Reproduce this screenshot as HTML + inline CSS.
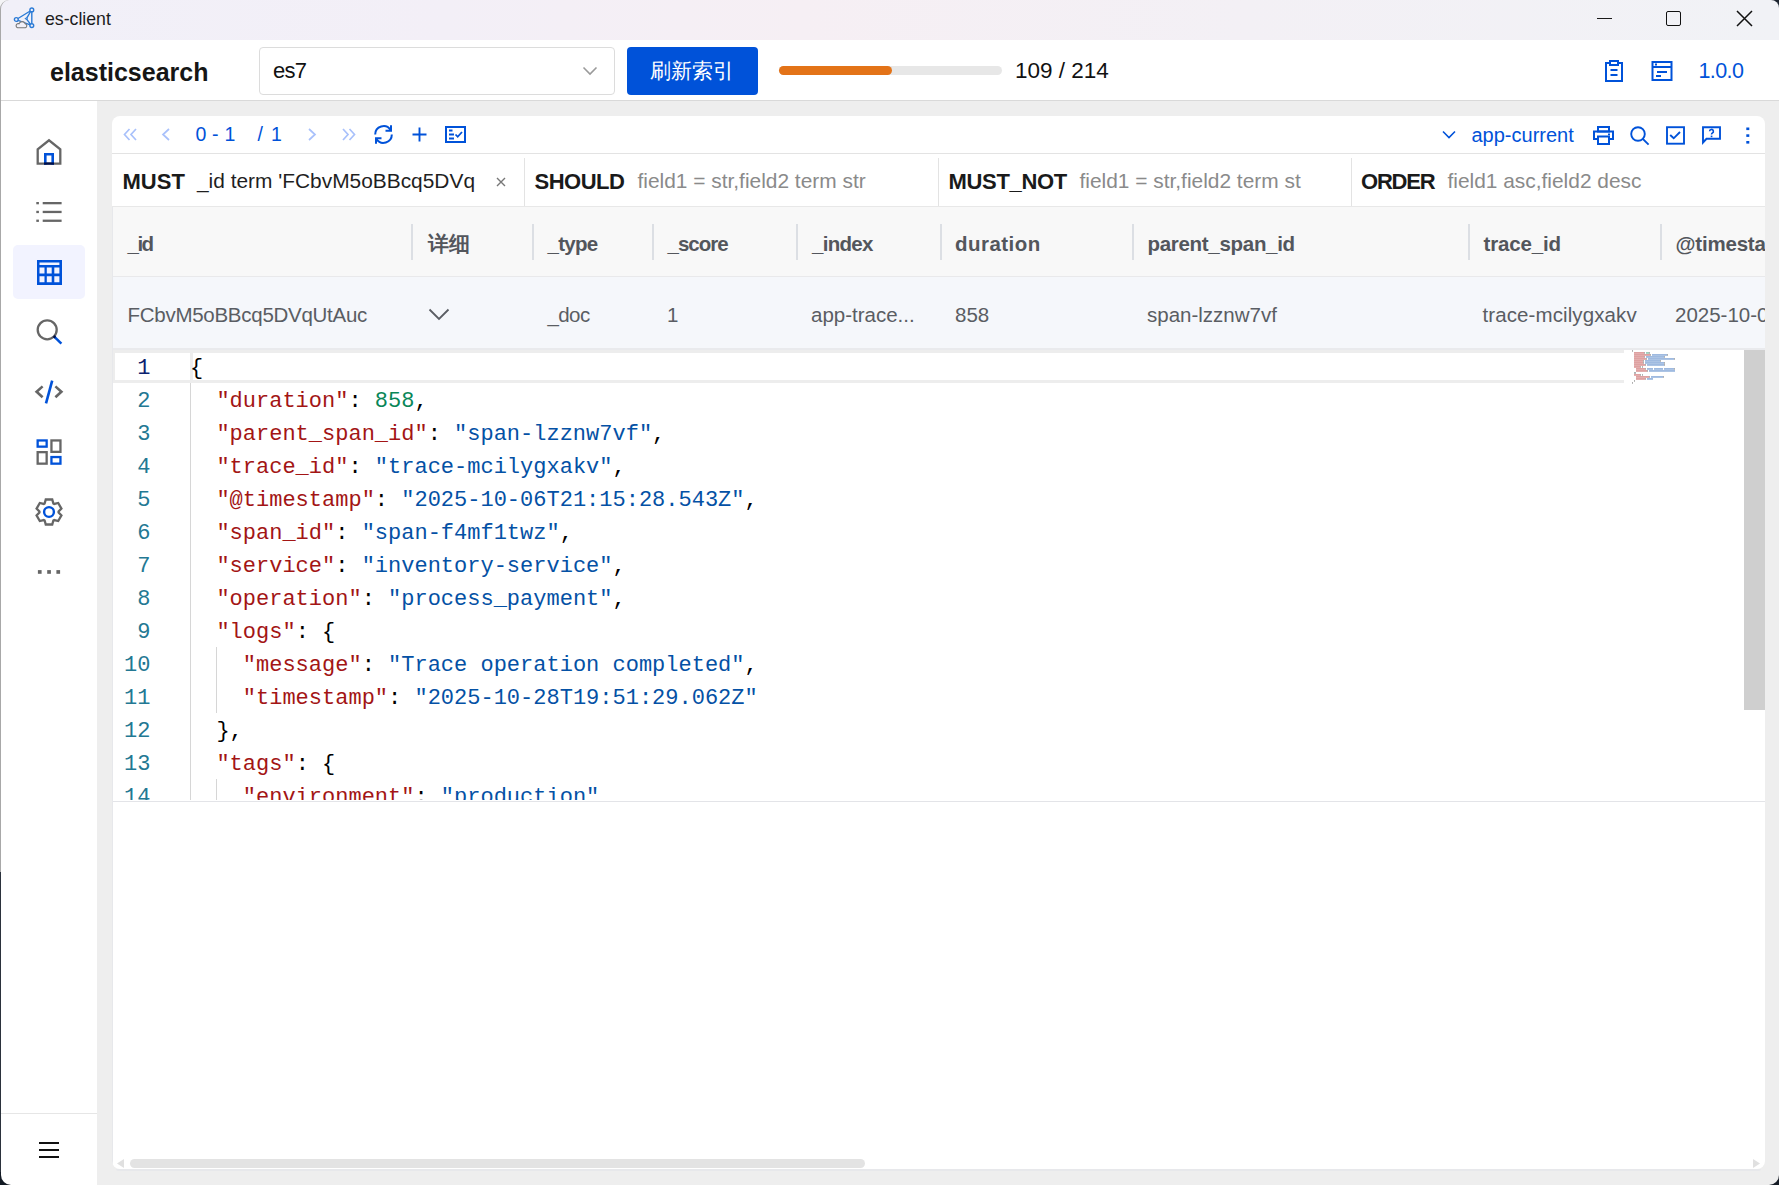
<!DOCTYPE html>
<html><head><meta charset="utf-8">
<style>
*{box-sizing:border-box;margin:0;padding:0}
html,body{width:1779px;height:1185px;overflow:hidden;background:#eeeeee;font-family:"Liberation Sans",sans-serif;position:relative}
.abs{position:absolute}
.t{position:absolute;line-height:1;white-space:nowrap}
.mono{font-family:"Liberation Mono",monospace}
</style></head><body>
<div class="abs" style="left:0;top:0;width:1779px;height:40px;background:linear-gradient(90deg,#f1f0f8 0%,#f3eff7 25%,#f6eff4 45%,#f3f0f5 70%,#f1f2f6 100%)"></div>
<svg class="abs" style="left:13px;top:6px" width="23" height="24" viewBox="0 0 23 24">
<g fill="none" stroke="#2b7bd6" stroke-width="1.4">
<circle cx="18.8" cy="3.9" r="1.9"/><circle cx="3.3" cy="13.5" r="1.9"/><circle cx="18.8" cy="19.6" r="1.9"/>
<path d="M12.3 12.6 L14.2 11.3 L14.2 13.9 Z" stroke-width="1.1"/>
<path d="M5 12.5 L17.2 5 M18.8 5.8 V17.7 M5.1 14.3 L17.2 18.9 M14.2 11.3 L17.6 5.5 M14.2 13.9 L17.4 18.2"/>
</g>
<path d="M4.6 21.8 H12.4 A2.2 2.2 0 0 0 12.1 17.6 A3.3 3.3 0 0 0 6 17.7 A2 2 0 0 0 4.6 21.8 Z" fill="#f2f0f8" stroke="#777" stroke-width="1.1"/>
</svg>
<div class="t" id="t_title" style="left:45px;top:11.22px;font-size:17.7px;color:#1c1c1c;font-family:'Liberation Sans',sans-serif;">es-client</div>
<div class="abs" style="left:1771px;top:0;width:8px;height:8px;background:#1d2530"></div>
<div class="abs" style="left:1759px;top:0;width:20px;height:20px;background:#f1f2f6;border-top-right-radius:8px"></div>
<div class="abs" style="left:1597px;top:18px;width:15px;height:1px;background:#1a1a1a"></div>
<div class="abs" style="left:1666px;top:11px;width:15px;height:15px;border:1.4px solid #111;border-radius:2px"></div>
<svg class="abs" style="left:1736px;top:10px" width="17" height="17" viewBox="0 0 17 17"><path d="M1 1 L16 16 M16 1 L1 16" stroke="#111" stroke-width="1.5"/></svg>
<div class="abs" style="left:0;top:40px;width:1779px;height:60px;background:#fff"></div>
<div class="abs" style="left:0;top:100px;width:1779px;height:1px;background:#d9d9d9"></div>
<div class="t" id="t_es" style="left:50px;top:60.04px;font-size:25px;color:#161616;font-family:'Liberation Sans',sans-serif;font-weight:bold;">elasticsearch</div>
<div class="abs" style="left:259px;top:47px;width:356px;height:48px;border:1px solid #dcdcdc;border-radius:4px;background:#fff"></div>
<div class="t" id="t_es7" style="left:273px;top:60.28px;font-size:22px;color:#111;font-family:'Liberation Sans',sans-serif;letter-spacing:-0.7px;">es7</div>
<svg class="abs" style="left:582px;top:66px" width="16" height="10" viewBox="0 0 16 10"><path d="M1.5 1.5 L8 8 L14.5 1.5" fill="none" stroke="#9a9a9a" stroke-width="1.6"/></svg>
<div class="abs" style="left:627px;top:47px;width:131px;height:48px;background:#0052d9;border-radius:4px"></div>
<div class="t" id="t_btn" style="left:649.5px;top:61.47px;font-size:21.3px;color:#fff;font-family:'Liberation Sans',sans-serif;">刷新索引</div>
<div class="abs" style="left:779px;top:66px;width:223px;height:9px;background:#e7e7e7;border-radius:4.5px"></div>
<div class="abs" style="left:779px;top:66px;width:113px;height:9px;background:#e37318;border-radius:4.5px"></div>
<div class="t" id="t_prog" style="left:1015px;top:60.05px;font-size:22.5px;color:#111;font-family:'Liberation Sans',sans-serif;">109 / 214</div>
<svg class="abs" style="left:1604px;top:59px" width="20" height="24" viewBox="0 0 20 24"><g fill="none" stroke="#0052d9" stroke-width="2"><path d="M5 4 H2 V22 H18 V4 H15"/><rect x="6" y="2" width="8" height="4"/><path d="M6.5 11 H13.5 M6.5 16 H13.5"/></g></svg>
<svg class="abs" style="left:1651px;top:60px" width="22" height="22" viewBox="0 0 22 22"><g fill="none" stroke="#0052d9" stroke-width="2"><rect x="1.5" y="2" width="19" height="18"/><path d="M1.5 7 H20.5 M6 12 H16 M5 16 H10"/></g><rect x="4" y="3.5" width="2" height="2" fill="#0052d9"/></svg>
<div class="t" id="t_ver" style="left:1698.5px;top:60.60px;font-size:21.5px;color:#0052d9;font-family:'Liberation Sans',sans-serif;letter-spacing:-0.6px;">1.0.0</div>
<div class="abs" style="left:0;top:101px;width:97px;height:1084px;background:#fff"></div>
<div class="abs" style="left:13px;top:245px;width:72px;height:54px;background:#f2f3ff;border-radius:5px"></div>
<svg class="abs" style="left:35px;top:138px" width="28" height="28" viewBox="0 0 28 28"><path d="M2.7 25.6 V11.3 L14 2.3 L25.3 11.3 V25.6 Z" fill="none" stroke="#666" stroke-width="2.3" stroke-linejoin="miter"/><path d="M10.3 26.7 V16.3 H17.7 V26.7" fill="none" stroke="#0052d9" stroke-width="2.6"/><rect x="9" y="24.4" width="10" height="2.3" fill="#00104a"/></svg>
<svg class="abs" style="left:35px;top:200px" width="28" height="24" viewBox="0 0 28 24"><g fill="#666"><rect x="1.3" y="2" width="2.6" height="2.3"/><rect x="1.3" y="10.8" width="2.6" height="2.3"/><rect x="1.3" y="19.6" width="2.6" height="2.3"/><rect x="7.7" y="2" width="18.9" height="2.3"/><rect x="7.7" y="10.8" width="18.9" height="2.3"/><rect x="7.7" y="19.6" width="18.9" height="2.3"/></g></svg>
<svg class="abs" style="left:36.5px;top:259.5px" width="25" height="25" viewBox="0 0 25 25"><path fill="#0052d9" fill-rule="evenodd" d="M0 0 H25 V25 H0 Z M2.5 2.5 H22.4 V5 H2.5 Z M2.5 7.5 H7.5 V13.5 H2.5 Z M9.8 7.5 H14.7 V13.5 H9.8 Z M17.3 7.5 H22.4 V13.5 H17.3 Z M2.5 16.2 H7.5 V22.3 H2.5 Z M9.8 16.2 H14.7 V22.3 H9.8 Z M17.3 16.2 H22.4 V22.3 H17.3 Z"/></svg>
<svg class="abs" style="left:35px;top:318px" width="28" height="28" viewBox="0 0 28 28"><circle cx="12.2" cy="11.8" r="9.5" fill="none" stroke="#666" stroke-width="2.3"/><path d="M19.2 18.6 L26.4 25.6" stroke="#0052d9" stroke-width="2.5"/><path d="M18.6 18 L20.3 19.7" stroke="#00104a" stroke-width="2.5"/></svg>
<svg class="abs" style="left:34px;top:379px" width="30" height="26" viewBox="0 0 30 26"><g fill="none" stroke-width="2.6"><path d="M8.6 7.4 L2.6 12.8 L8.6 18.3 M21.4 7.4 L27.4 12.8 L21.4 18.3" stroke="#666"/><path d="M18.2 1.6 L12 24.4" stroke="#0052d9"/></g></svg>
<svg class="abs" style="left:35px;top:438px" width="28" height="28" viewBox="0 0 28 28"><g fill="none" stroke-width="2.3"><rect x="2.65" y="2.45" width="9" height="6.2" stroke="#0052d9"/><rect x="2.65" y="14.15" width="9" height="11.5" stroke="#666"/><rect x="16.45" y="2.45" width="9" height="11.4" stroke="#666"/><rect x="16.45" y="19.05" width="9" height="6.6" stroke="#0052d9"/></g></svg>
<svg class="abs" style="left:35px;top:498px" width="28" height="28" viewBox="0 0 28 28"><path d="M9.64 5.45 L10.77 1.51 L17.23 1.51 L18.36 5.45 L19.23 5.95 L23.20 4.96 L26.43 10.55 L23.59 13.50 L23.59 14.50 L26.43 17.45 L23.20 23.04 L19.23 22.05 L18.36 22.55 L17.23 26.49 L10.77 26.49 L9.64 22.55 L8.77 22.05 L4.80 23.04 L1.57 17.45 L4.41 14.50 L4.41 13.50 L1.57 10.55 L4.80 4.96 L8.77 5.95Z" fill="none" stroke="#666" stroke-width="2.3" stroke-linejoin="miter"/><circle cx="14" cy="14" r="4.9" fill="none" stroke="#0052d9" stroke-width="2.4"/></svg>
<svg class="abs" style="left:37px;top:569px" width="24" height="6" viewBox="0 0 24 6"><g fill="#666"><rect x="0.9" y="1.1" width="3.7" height="3.7"/><rect x="10.2" y="1.1" width="3.7" height="3.7"/><rect x="19.4" y="1.1" width="3.7" height="3.7"/></g></svg>
<div class="abs" style="left:1px;top:1113px;width:96px;height:1px;background:#e6e6e6"></div>
<svg class="abs" style="left:39px;top:1141px" width="20" height="18" viewBox="0 0 20 18"><g fill="#111"><rect x="0" y="1" width="20" height="2"/><rect x="0" y="8" width="20" height="2"/><rect x="0" y="15" width="20" height="2"/></g></svg>
<div class="abs" style="left:0;top:10px;width:1px;height:862px;background:#a8a8a8"></div>
<div class="abs" style="left:0;top:0;width:8px;height:8px;background:#f4f4f6"></div>
<div class="abs" style="left:0;top:0;width:16px;height:16px;background:#f1f0f8;border-top-left-radius:9px;border-left:1px solid #a8a8a8;border-top:0"></div>
<div class="abs" id="card" style="left:112px;top:116px;width:1653px;height:1053px;background:#fff;border-radius:8px;overflow:hidden">
<div class="abs" style="left:0px;top:37px;width:1653px;height:1px;background:#e3e3e3"></div>
<svg class="abs" style="left:11px;top:12px" width="15" height="13" viewBox="0 0 15 13"><path d="M6.5 1 L1.5 6.5 L6.5 12 M13 1 L8 6.5 L13 12" fill="none" stroke="#a9c1fb" stroke-width="1.7"/></svg>
<svg class="abs" style="left:49px;top:12px" width="10" height="13" viewBox="0 0 10 13"><path d="M8 1 L2 6.5 L8 12" fill="none" stroke="#a9c1fb" stroke-width="1.7"/></svg>
<div class="t" id="t_pg" style="left:83.5px;top:9.49px;font-size:19.5px;color:#0052d9;font-family:'Liberation Sans',sans-serif;">0</div>
<div class="t" style="left:100px;top:9.49px;font-size:19.5px;color:#0052d9;font-family:'Liberation Sans',sans-serif;">-</div>
<div class="t" style="left:112.5px;top:9.49px;font-size:19.5px;color:#0052d9;font-family:'Liberation Sans',sans-serif;">1</div>
<div class="t" style="left:145.5px;top:9.49px;font-size:19.5px;color:#0052d9;font-family:'Liberation Sans',sans-serif;">/</div>
<div class="t" id="t_pg2" style="left:159px;top:9.49px;font-size:19.5px;color:#0052d9;font-family:'Liberation Sans',sans-serif;">1</div>
<svg class="abs" style="left:195px;top:12px" width="10" height="13" viewBox="0 0 10 13"><path d="M2 1 L8 6.5 L2 12" fill="none" stroke="#a9c1fb" stroke-width="1.7"/></svg>
<svg class="abs" style="left:229px;top:12px" width="15" height="13" viewBox="0 0 15 13"><path d="M2 1 L7 6.5 L2 12 M8.5 1 L13.5 6.5 L8.5 12" fill="none" stroke="#a9c1fb" stroke-width="1.7"/></svg>
<svg class="abs" style="left:261px;top:8px" width="21" height="21" viewBox="0 0 21 21"><g fill="none" stroke="#0052d9" stroke-width="2"><path d="M2.2 10.5 A8.3 8.3 0 0 1 17.5 6"/><path d="M18.8 10.5 A8.3 8.3 0 0 1 3.5 15"/><path d="M18 1.3 V6.8 H12.5" stroke-linejoin="miter"/><path d="M3 19.7 V14.2 H8.5"/></g></svg>
<svg class="abs" style="left:300px;top:11px" width="15" height="15" viewBox="0 0 15 15"><path d="M7.5 0.5 V14.5 M0.5 7.5 H14.5" stroke="#0052d9" stroke-width="1.9"/></svg>
<svg class="abs" style="left:333px;top:10px" width="21" height="17" viewBox="0 0 21 17"><rect x="1" y="1" width="19" height="15" fill="none" stroke="#0052d9" stroke-width="2"/><path d="M4 4.5 H7.5 M4 8.5 H9 M4 12.5 H9" stroke="#0052d9" stroke-width="1.8"/><path d="M10.5 8.5 L12.7 10.8 L17 6" fill="none" stroke="#0052d9" stroke-width="1.8"/></svg>
<svg class="abs" style="left:1330px;top:14px" width="14" height="10" viewBox="0 0 14 10"><path d="M1 1.5 L7 7.5 L13 1.5" fill="none" stroke="#0052d9" stroke-width="1.6"/></svg>
<div class="t" id="t_app" style="left:1359.5px;top:8.87px;font-size:20px;color:#0052d9;font-family:'Liberation Sans',sans-serif;">app-current</div>
<svg class="abs" style="left:1481px;top:10px" width="21" height="19" viewBox="0 0 21 19"><g fill="none" stroke="#0052d9" stroke-width="2"><rect x="5" y="1" width="11" height="4.5"/><path d="M5 13 H1 V5.5 H20 V13 H16"/><rect x="5" y="10.5" width="11" height="7.5"/></g><rect x="15" y="7.5" width="2" height="1.8" fill="#0052d9"/></svg>
<svg class="abs" style="left:1518px;top:10px" width="20" height="20" viewBox="0 0 20 20"><circle cx="8" cy="8" r="6.8" fill="none" stroke="#0052d9" stroke-width="1.9"/><path d="M12.8 12.8 L18.6 18.6" stroke="#0052d9" stroke-width="1.9"/></svg>
<svg class="abs" style="left:1554px;top:10px" width="19" height="19" viewBox="0 0 19 19"><rect x="1" y="1.2" width="17" height="16.5" fill="none" stroke="#0052d9" stroke-width="1.9"/><path d="M4.2 9 L7.7 12.3 L14 6" fill="none" stroke="#0052d9" stroke-width="1.9"/></svg>
<svg class="abs" style="left:1590px;top:10px" width="19" height="19" viewBox="0 0 19 19"><path d="M1 1.2 H18 V12.8 H4.5 L1 16.5 Z" fill="none" stroke="#0052d9" stroke-width="1.9" stroke-linejoin="miter"/><path d="M7.6 5.3 A1.9 1.9 0 1 1 10.4 7 Q9.5 7.5 9.5 8.6" fill="none" stroke="#0052d9" stroke-width="1.6"/><rect x="8.7" y="9.6" width="1.7" height="1.6" fill="#0052d9"/></svg>
<svg class="abs" style="left:1634px;top:11px" width="4" height="17" viewBox="0 0 4 17"><g fill="#0052d9"><rect x="0.3" y="0.5" width="3" height="2.6"/><rect x="0.3" y="7.3" width="3" height="2.6"/><rect x="0.3" y="14" width="3" height="2.6"/></g></svg>
<div class="abs" style="left:0px;top:90px;width:1653px;height:1px;background:#e8e8e8"></div>
<div class="abs" style="left:412px;top:42px;width:1px;height:48px;background:#e3e3e3"></div>
<div class="abs" style="left:826px;top:42px;width:1px;height:48px;background:#e3e3e3"></div>
<div class="abs" style="left:1239px;top:42px;width:1px;height:48px;background:#e3e3e3"></div>
<div class="t" id="t_must" style="left:10.5px;top:54.78px;font-size:22px;color:#1a1a1a;font-family:'Liberation Sans',sans-serif;font-weight:bold;">MUST</div>
<div class="t" id="t_mustv" style="left:85px;top:55.41px;font-size:20.9px;color:#1f1f1f;font-family:'Liberation Sans',sans-serif;">_id term 'FCbvM5oBBcq5DVq</div>
<svg class="abs" style="left:384px;top:61px" width="10" height="10" viewBox="0 0 10 10"><path d="M1 1 L9 9 M9 1 L1 9" stroke="#777" stroke-width="1.4"/></svg>
<div class="t" id="t_should" style="left:422.5px;top:54.78px;font-size:22px;color:#1a1a1a;font-family:'Liberation Sans',sans-serif;font-weight:bold;letter-spacing:-0.5px;">SHOULD</div>
<div class="t" id="t_shouldv" style="left:525.5px;top:55.41px;font-size:20.9px;color:#8a8a8a;font-family:'Liberation Sans',sans-serif;">field1 = str,field2 term str</div>
<div class="t" id="t_mustnot" style="left:836.5px;top:54.78px;font-size:22px;color:#1a1a1a;font-family:'Liberation Sans',sans-serif;font-weight:bold;letter-spacing:-0.33px;">MUST_NOT</div>
<div class="t" id="t_mustnotv" style="left:967.5px;top:55.41px;font-size:20.9px;color:#8a8a8a;font-family:'Liberation Sans',sans-serif;">field1 = str,field2 term st</div>
<div class="t" id="t_order" style="left:1249px;top:54.78px;font-size:22px;color:#1a1a1a;font-family:'Liberation Sans',sans-serif;font-weight:bold;letter-spacing:-1.2px;">ORDER</div>
<div class="t" id="t_orderv" style="left:1335.5px;top:55.41px;font-size:20.9px;color:#8a8a8a;font-family:'Liberation Sans',sans-serif;">field1 asc,field2 desc</div>
<div class="abs" style="left:0px;top:91px;width:1653px;height:69px;background:#f8f8f8"></div>
<div class="abs" style="left:0px;top:160px;width:1653px;height:1px;background:#e9e9eb"></div>
<div class="abs" style="left:299px;top:108px;width:2px;height:36px;background:#dcdfe4"></div>
<div class="abs" style="left:420px;top:108px;width:2px;height:36px;background:#dcdfe4"></div>
<div class="abs" style="left:540px;top:108px;width:2px;height:36px;background:#dcdfe4"></div>
<div class="abs" style="left:684px;top:108px;width:2px;height:36px;background:#dcdfe4"></div>
<div class="abs" style="left:828px;top:108px;width:2px;height:36px;background:#dcdfe4"></div>
<div class="abs" style="left:1020px;top:108px;width:2px;height:36px;background:#dcdfe4"></div>
<div class="abs" style="left:1356px;top:108px;width:2px;height:36px;background:#dcdfe4"></div>
<div class="abs" style="left:1548px;top:108px;width:2px;height:36px;background:#dcdfe4"></div>
<div class="t" id="h0" style="left:15.5px;top:117.85px;font-size:20.5px;color:#53565c;font-family:'Liberation Sans',sans-serif;font-weight:bold;letter-spacing:-1.5px;">_id</div>
<div class="t" id="h1" style="left:315.5px;top:117.85px;font-size:20.5px;color:#53565c;font-family:'Liberation Sans',sans-serif;font-weight:bold;letter-spacing:0px;">详细</div>
<div class="t" id="h2" style="left:435.5px;top:117.85px;font-size:20.5px;color:#53565c;font-family:'Liberation Sans',sans-serif;font-weight:bold;letter-spacing:-0.75px;">_type</div>
<div class="t" id="h3" style="left:555.5px;top:117.85px;font-size:20.5px;color:#53565c;font-family:'Liberation Sans',sans-serif;font-weight:bold;letter-spacing:-1.0px;">_score</div>
<div class="t" id="h4" style="left:700px;top:117.85px;font-size:20.5px;color:#53565c;font-family:'Liberation Sans',sans-serif;font-weight:bold;letter-spacing:-0.7px;">_index</div>
<div class="t" id="h5" style="left:843px;top:117.85px;font-size:20.5px;color:#53565c;font-family:'Liberation Sans',sans-serif;font-weight:bold;letter-spacing:0.47px;">duration</div>
<div class="t" id="h6" style="left:1035.5px;top:117.85px;font-size:20.5px;color:#53565c;font-family:'Liberation Sans',sans-serif;font-weight:bold;letter-spacing:-0.3px;">parent_span_id</div>
<div class="t" id="h7" style="left:1371.5px;top:117.85px;font-size:20.5px;color:#53565c;font-family:'Liberation Sans',sans-serif;font-weight:bold;letter-spacing:-0.17px;">trace_id</div>
<div class="t" id="h8" style="left:1563.5px;top:117.85px;font-size:20.5px;color:#53565c;font-family:'Liberation Sans',sans-serif;font-weight:bold;letter-spacing:-0.2px;">@timestamp</div>
<div class="abs" style="left:0px;top:161px;width:1653px;height:71px;background:#f5f7fb"></div>
<div class="t" id="c0" style="left:15.5px;top:189.45px;font-size:20.5px;color:#5a5d63;font-family:'Liberation Sans',sans-serif;letter-spacing:-0.27px;">FCbvM5oBBcq5DVqUtAuc</div>
<div class="t" id="c1" style="left:435.5px;top:189.45px;font-size:20.5px;color:#5a5d63;font-family:'Liberation Sans',sans-serif;letter-spacing:-0.6px;">_doc</div>
<div class="t" id="c2" style="left:555px;top:189.45px;font-size:20.5px;color:#5a5d63;font-family:'Liberation Sans',sans-serif;letter-spacing:0px;">1</div>
<div class="t" id="c3" style="left:699px;top:189.45px;font-size:20.5px;color:#5a5d63;font-family:'Liberation Sans',sans-serif;letter-spacing:0px;">app-trace...</div>
<div class="t" id="c4" style="left:843px;top:189.45px;font-size:20.5px;color:#5a5d63;font-family:'Liberation Sans',sans-serif;letter-spacing:0px;">858</div>
<div class="t" id="c5" style="left:1035px;top:189.45px;font-size:20.5px;color:#5a5d63;font-family:'Liberation Sans',sans-serif;letter-spacing:0px;">span-lzznw7vf</div>
<div class="t" id="c6" style="left:1370.5px;top:189.45px;font-size:20.5px;color:#5a5d63;font-family:'Liberation Sans',sans-serif;letter-spacing:0.1px;">trace-mcilygxakv</div>
<div class="t" id="c7" style="left:1563px;top:189.45px;font-size:20.5px;color:#5a5d63;font-family:'Liberation Sans',sans-serif;letter-spacing:0px;">2025-10-06T21:15:28.543Z</div>
<svg class="abs" style="left:316px;top:192px" width="22" height="13" viewBox="0 0 22 13"><path d="M1.5 1.5 L11 11 L20.5 1.5" fill="none" stroke="#5a5d63" stroke-width="1.8"/></svg>
<div class="abs" style="left:0px;top:91px;width:1px;height:961px;background:#e7e8eb"></div>
<div class="abs" style="left:1px;top:232px;width:1652px;height:2px;background:#e9eaed"></div>
<div class="abs" style="left:1px;top:234px;width:1511px;height:3px;background:#ededed"></div>
<div class="abs" style="left:1px;top:234px;width:2px;height:33px;background:#ededed"></div>
<div class="abs" style="left:78px;top:237px;width:3px;height:27px;background:#ededed"></div>
<div class="abs" style="left:1px;top:264px;width:1511px;height:3px;background:#ededed"></div>
<div class="abs" style="left:1px;top:685px;width:1652px;height:1px;background:#e3e4e8"></div>
<div class="abs" style="left:78px;top:267px;width:1px;height:417px;background:#d6d6d6"></div>
<div class="abs" style="left:104px;top:531px;width:1px;height:66px;background:#d6d6d6"></div>
<div class="abs" style="left:104px;top:663px;width:1px;height:21px;background:#d6d6d6"></div>
<div class="abs" style="left:0;top:234px;width:1653px;height:450px;overflow:hidden">
<div class="t mono" style="left:78px;top:7.84px;font-size:22.0px;white-space:pre"><span style="color:#000">{</span></div>
<div class="t mono" style="left:0px;width:38.5px;text-align:right;top:7.84px;font-size:22.0px;color:#0b216f">1</div>
<div class="t mono" style="left:78px;top:40.84px;font-size:22.0px;white-space:pre"><span style="color:#000">  </span><span style="color:#a31515">"duration"</span><span style="color:#000">: </span><span style="color:#098658">858</span><span style="color:#000">,</span></div>
<div class="t mono" style="left:0px;width:38.5px;text-align:right;top:40.84px;font-size:22.0px;color:#237893">2</div>
<div class="t mono" style="left:78px;top:73.84px;font-size:22.0px;white-space:pre"><span style="color:#000">  </span><span style="color:#a31515">"parent_span_id"</span><span style="color:#000">: </span><span style="color:#0451a5">"span-lzznw7vf"</span><span style="color:#000">,</span></div>
<div class="t mono" style="left:0px;width:38.5px;text-align:right;top:73.84px;font-size:22.0px;color:#237893">3</div>
<div class="t mono" style="left:78px;top:106.84px;font-size:22.0px;white-space:pre"><span style="color:#000">  </span><span style="color:#a31515">"trace_id"</span><span style="color:#000">: </span><span style="color:#0451a5">"trace-mcilygxakv"</span><span style="color:#000">,</span></div>
<div class="t mono" style="left:0px;width:38.5px;text-align:right;top:106.84px;font-size:22.0px;color:#237893">4</div>
<div class="t mono" style="left:78px;top:139.84px;font-size:22.0px;white-space:pre"><span style="color:#000">  </span><span style="color:#a31515">"@timestamp"</span><span style="color:#000">: </span><span style="color:#0451a5">"2025-10-06T21:15:28.543Z"</span><span style="color:#000">,</span></div>
<div class="t mono" style="left:0px;width:38.5px;text-align:right;top:139.84px;font-size:22.0px;color:#237893">5</div>
<div class="t mono" style="left:78px;top:172.84px;font-size:22.0px;white-space:pre"><span style="color:#000">  </span><span style="color:#a31515">"span_id"</span><span style="color:#000">: </span><span style="color:#0451a5">"span-f4mf1twz"</span><span style="color:#000">,</span></div>
<div class="t mono" style="left:0px;width:38.5px;text-align:right;top:172.84px;font-size:22.0px;color:#237893">6</div>
<div class="t mono" style="left:78px;top:205.84px;font-size:22.0px;white-space:pre"><span style="color:#000">  </span><span style="color:#a31515">"service"</span><span style="color:#000">: </span><span style="color:#0451a5">"inventory-service"</span><span style="color:#000">,</span></div>
<div class="t mono" style="left:0px;width:38.5px;text-align:right;top:205.84px;font-size:22.0px;color:#237893">7</div>
<div class="t mono" style="left:78px;top:238.84px;font-size:22.0px;white-space:pre"><span style="color:#000">  </span><span style="color:#a31515">"operation"</span><span style="color:#000">: </span><span style="color:#0451a5">"process_payment"</span><span style="color:#000">,</span></div>
<div class="t mono" style="left:0px;width:38.5px;text-align:right;top:238.84px;font-size:22.0px;color:#237893">8</div>
<div class="t mono" style="left:78px;top:271.84px;font-size:22.0px;white-space:pre"><span style="color:#000">  </span><span style="color:#a31515">"logs"</span><span style="color:#000">: {</span></div>
<div class="t mono" style="left:0px;width:38.5px;text-align:right;top:271.84px;font-size:22.0px;color:#237893">9</div>
<div class="t mono" style="left:78px;top:304.84px;font-size:22.0px;white-space:pre"><span style="color:#000">    </span><span style="color:#a31515">"message"</span><span style="color:#000">: </span><span style="color:#0451a5">"Trace operation completed"</span><span style="color:#000">,</span></div>
<div class="t mono" style="left:0px;width:38.5px;text-align:right;top:304.84px;font-size:22.0px;color:#237893">10</div>
<div class="t mono" style="left:78px;top:337.84px;font-size:22.0px;white-space:pre"><span style="color:#000">    </span><span style="color:#a31515">"timestamp"</span><span style="color:#000">: </span><span style="color:#0451a5">"2025-10-28T19:51:29.062Z"</span></div>
<div class="t mono" style="left:0px;width:38.5px;text-align:right;top:337.84px;font-size:22.0px;color:#237893">11</div>
<div class="t mono" style="left:78px;top:370.84px;font-size:22.0px;white-space:pre"><span style="color:#000">  },</span></div>
<div class="t mono" style="left:0px;width:38.5px;text-align:right;top:370.84px;font-size:22.0px;color:#237893">12</div>
<div class="t mono" style="left:78px;top:403.84px;font-size:22.0px;white-space:pre"><span style="color:#000">  </span><span style="color:#a31515">"tags"</span><span style="color:#000">: {</span></div>
<div class="t mono" style="left:0px;width:38.5px;text-align:right;top:403.84px;font-size:22.0px;color:#237893">13</div>
<div class="t mono" style="left:78px;top:436.84px;font-size:22.0px;white-space:pre"><span style="color:#000">    </span><span style="color:#a31515">"environment"</span><span style="color:#000">: </span><span style="color:#0451a5">"production"</span><span style="color:#000">,</span></div>
<div class="t mono" style="left:0px;width:38.5px;text-align:right;top:436.84px;font-size:22.0px;color:#237893">14</div>
</div>
<svg class="abs" style="left:1520px;top:234px" width="50" height="36" viewBox="0 0 50 36"><rect x="0" y="0.3" width="1" height="1.3" fill="#444" opacity="0.6"/><rect x="2" y="2.3" width="10" height="1.3" fill="#b02020" opacity="0.6"/><rect x="12" y="2.3" width="1" height="1.3" fill="#444" opacity="0.6"/><rect x="14" y="2.3" width="3" height="1.3" fill="#109060" opacity="0.6"/><rect x="17" y="2.3" width="1" height="1.3" fill="#444" opacity="0.6"/><rect x="2" y="4.3" width="16" height="1.3" fill="#b02020" opacity="0.6"/><rect x="18" y="4.3" width="1" height="1.3" fill="#444" opacity="0.6"/><rect x="20" y="4.3" width="15" height="1.3" fill="#1a5cb5" opacity="0.6"/><rect x="35" y="4.3" width="1" height="1.3" fill="#444" opacity="0.6"/><rect x="2" y="6.3" width="10" height="1.3" fill="#b02020" opacity="0.6"/><rect x="12" y="6.3" width="1" height="1.3" fill="#444" opacity="0.6"/><rect x="14" y="6.3" width="18" height="1.3" fill="#1a5cb5" opacity="0.6"/><rect x="32" y="6.3" width="1" height="1.3" fill="#444" opacity="0.6"/><rect x="2" y="8.3" width="12" height="1.3" fill="#b02020" opacity="0.6"/><rect x="14" y="8.3" width="1" height="1.3" fill="#444" opacity="0.6"/><rect x="16" y="8.3" width="26" height="1.3" fill="#1a5cb5" opacity="0.6"/><rect x="42" y="8.3" width="1" height="1.3" fill="#444" opacity="0.6"/><rect x="2" y="10.3" width="9" height="1.3" fill="#b02020" opacity="0.6"/><rect x="11" y="10.3" width="1" height="1.3" fill="#444" opacity="0.6"/><rect x="13" y="10.3" width="15" height="1.3" fill="#1a5cb5" opacity="0.6"/><rect x="28" y="10.3" width="1" height="1.3" fill="#444" opacity="0.6"/><rect x="2" y="12.3" width="9" height="1.3" fill="#b02020" opacity="0.6"/><rect x="11" y="12.3" width="1" height="1.3" fill="#444" opacity="0.6"/><rect x="13" y="12.3" width="19" height="1.3" fill="#1a5cb5" opacity="0.6"/><rect x="32" y="12.3" width="1" height="1.3" fill="#444" opacity="0.6"/><rect x="2" y="14.3" width="11" height="1.3" fill="#b02020" opacity="0.6"/><rect x="13" y="14.3" width="1" height="1.3" fill="#444" opacity="0.6"/><rect x="15" y="14.3" width="17" height="1.3" fill="#1a5cb5" opacity="0.6"/><rect x="32" y="14.3" width="1" height="1.3" fill="#444" opacity="0.6"/><rect x="2" y="16.3" width="6" height="1.3" fill="#b02020" opacity="0.6"/><rect x="8" y="16.3" width="1" height="1.3" fill="#444" opacity="0.6"/><rect x="10" y="16.3" width="1" height="1.3" fill="#444" opacity="0.6"/><rect x="4" y="18.3" width="9" height="1.3" fill="#b02020" opacity="0.6"/><rect x="13" y="18.3" width="1" height="1.3" fill="#444" opacity="0.6"/><rect x="15" y="18.3" width="6" height="1.3" fill="#1a5cb5" opacity="0.6"/><rect x="22" y="18.3" width="9" height="1.3" fill="#1a5cb5" opacity="0.6"/><rect x="32" y="18.3" width="10" height="1.3" fill="#1a5cb5" opacity="0.6"/><rect x="42" y="18.3" width="1" height="1.3" fill="#444" opacity="0.6"/><rect x="4" y="20.3" width="11" height="1.3" fill="#b02020" opacity="0.6"/><rect x="15" y="20.3" width="1" height="1.3" fill="#444" opacity="0.6"/><rect x="17" y="20.3" width="26" height="1.3" fill="#1a5cb5" opacity="0.6"/><rect x="2" y="22.3" width="2" height="1.3" fill="#444" opacity="0.6"/><rect x="2" y="24.3" width="6" height="1.3" fill="#b02020" opacity="0.6"/><rect x="8" y="24.3" width="1" height="1.3" fill="#444" opacity="0.6"/><rect x="10" y="24.3" width="1" height="1.3" fill="#444" opacity="0.6"/><rect x="4" y="26.3" width="13" height="1.3" fill="#b02020" opacity="0.6"/><rect x="17" y="26.3" width="1" height="1.3" fill="#444" opacity="0.6"/><rect x="19" y="26.3" width="12" height="1.3" fill="#1a5cb5" opacity="0.6"/><rect x="31" y="26.3" width="1" height="1.3" fill="#444" opacity="0.6"/><rect x="4" y="28.3" width="9" height="1.3" fill="#b02020" opacity="0.6"/><rect x="13" y="28.3" width="1" height="1.3" fill="#444" opacity="0.6"/><rect x="15" y="28.3" width="6" height="1.3" fill="#1a5cb5" opacity="0.6"/><rect x="2" y="30.3" width="1" height="1.3" fill="#444" opacity="0.6"/><rect x="0" y="32.3" width="1" height="1.3" fill="#444" opacity="0.6"/></svg>
<div class="abs" style="left:1632px;top:234px;width:21px;height:360px;background:#cfcfcf"></div>
<div class="abs" style="left:18px;top:1043px;width:735px;height:9px;background:#e3e3e3;border-radius:4.5px"></div>
<svg class="abs" style="left:5px;top:1043px" width="7" height="9" viewBox="0 0 7 9"><path d="M7 0 V9 L0 4.5Z" fill="#e0e0e0"/></svg>
<svg class="abs" style="left:1641px;top:1043px" width="7" height="9" viewBox="0 0 7 9"><path d="M0 0 V9 L7 4.5Z" fill="#e0e0e0"/></svg>
</div>
<div class="abs" style="left:116px;top:1169px;width:1645px;height:2px;background:#e7e8eb;border-radius:0 0 4px 4px"></div>
<div class="abs" style="left:1768px;top:1174px;width:11px;height:11px;background:#161c26"></div>
<div class="abs" style="left:1766px;top:1163px;width:13px;height:22px;background:#eeeeee;border-bottom-right-radius:10px"></div>
<div class="abs" style="left:0;top:872px;width:1px;height:313px;background:#2b323c"></div>
<div class="abs" style="left:0;top:1172px;width:12px;height:13px;background:#131a24"></div>
<div class="abs" style="left:1px;top:1150px;width:30px;height:35px;background:#fff;border-bottom-left-radius:10px"></div>
</body></html>
